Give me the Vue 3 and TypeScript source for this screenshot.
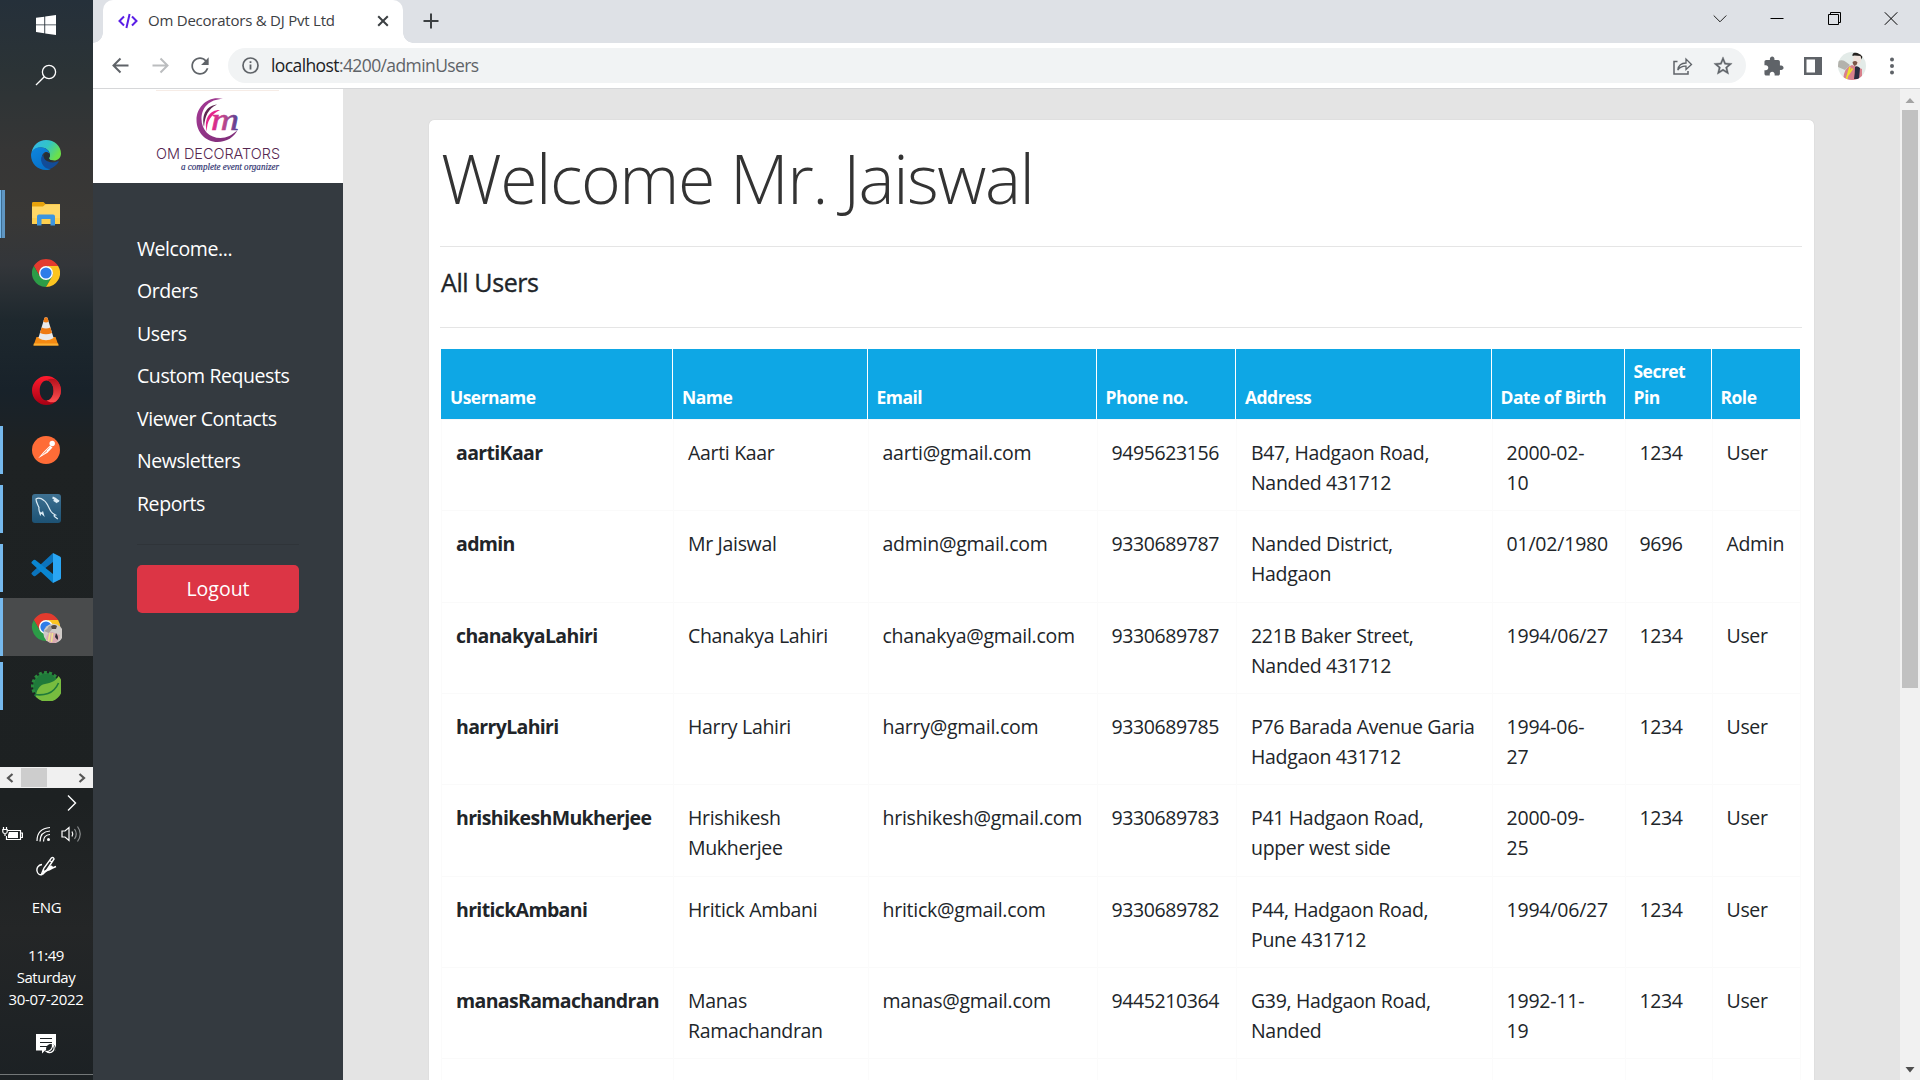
<script setup lang="ts">
interface User {
  username: string
  name: string
  email: string
  phone: string
  address: string[]
  dob: string[]
  pin: string
  role: string
}

const columns: string[][] = [
  ['Username'], ['Name'], ['Email'], ['Phone no.'], ['Address'], ['Date of Birth'], ['Secret', 'Pin'], ['Role'],
]

const navItems: string[] = ['Welcome...', 'Orders', 'Users', 'Custom Requests', 'Viewer Contacts', 'Newsletters', 'Reports']

const users: User[] = [
  { username: 'aartiKaar', name: 'Aarti Kaar', email: 'aarti@gmail.com', phone: '9495623156', address: ['B47, Hadgaon Road,', 'Nanded 431712'], dob: ['2000-02-', '10'], pin: '1234', role: 'User' },
  { username: 'admin', name: 'Mr Jaiswal', email: 'admin@gmail.com', phone: '9330689787', address: ['Nanded District,', 'Hadgaon'], dob: ['01/02/1980'], pin: '9696', role: 'Admin' },
  { username: 'chanakyaLahiri', name: 'Chanakya Lahiri', email: 'chanakya@gmail.com', phone: '9330689787', address: ['221B Baker Street,', 'Nanded 431712'], dob: ['1994/06/27'], pin: '1234', role: 'User' },
  { username: 'harryLahiri', name: 'Harry Lahiri', email: 'harry@gmail.com', phone: '9330689785', address: ['P76 Barada Avenue Garia', 'Hadgaon 431712'], dob: ['1994-06-', '27'], pin: '1234', role: 'User' },
  { username: 'hrishikeshMukherjee', name: 'Hrishikesh Mukherjee', email: 'hrishikesh@gmail.com', phone: '9330689783', address: ['P41 Hadgaon Road,', 'upper west side'], dob: ['2000-09-', '25'], pin: '1234', role: 'User' },
  { username: 'hritickAmbani', name: 'Hritick Ambani', email: 'hritick@gmail.com', phone: '9330689782', address: ['P44, Hadgaon Road,', 'Pune 431712'], dob: ['1994/06/27'], pin: '1234', role: 'User' },
  { username: 'manasRamachandran', name: 'Manas Ramachandran', email: 'manas@gmail.com', phone: '9445210364', address: ['G39, Hadgaon Road,', 'Nanded'], dob: ['1992-11-', '19'], pin: '1234', role: 'User' },
]
</script>

<template>
  <div class="screen">
    <aside class="taskbar">
      <div class="sys-btn">
        <svg width="20" height="20" viewBox="0 0 20 20" fill="#fff"><path d="M0 2.8 8.3 1.7V9.4H0zM9.2 1.5 20 0V9.4H9.2zM0 10.3H8.3V18.2L0 17.1zM9.2 10.3H20V20L9.2 18.4z" /></svg>
      </div>
      <div class="sys-btn">
        <svg width="22" height="22" viewBox="0 0 22 22" fill="none" stroke="#fff" stroke-width="1.3"><circle cx="14" cy="8" r="6.6" /><path d="M9.3 12.7 1 21" /></svg>
      </div>
      <div class="tasks">
        <div class="task">
          <svg width="30" height="30" viewBox="0 0 30 30">
            <defs>
              <linearGradient id="eTop" x1="0" y1="0" x2="1" y2=".5"><stop offset="0" stop-color="#35b4ee" /><stop offset=".55" stop-color="#32c5c5" /><stop offset="1" stop-color="#6be04a" /></linearGradient>
              <linearGradient id="eLeft" x1="0" y1="0" x2=".6" y2="1"><stop offset="0" stop-color="#0e86dd" /><stop offset="1" stop-color="#0671c9" /></linearGradient>
            </defs>
            <path d="M.6 12.5C1.8 5 7.800 0 15 0c8.500 0 15 6 15 13.500 0 4.500-3.500 7-7 7-3 0-5-1-5-2.300 0-.8 1-1.300 1-3.200 0-4-4-7.500-9-7.500C6 7.500 2.500 9 .6 12.500z" fill="url(#eTop)" />
            <path d="M0 15C0 10 4.500 7.200 9.500 7.200c5 0 8.500 3 9 6.500-1.500-1.700-3.500-2-5-1.200-2.500 1.500-3.500 5-2 8.500 1.500 3.600 4 6.500 8 8.200C17 30 16 30 15 30 6.500 30 0 23.500 0 15z" fill="url(#eLeft)" />
            <path d="M12.300 14.500c-2 2-3 5-1.500 8.500 1.200 3 4.500 6 8 6 3.700-1.200 7-4 9-7.200.3-.6-.2-.8-.8-.5-6 2.800-15 .2-14.700-6.800z" fill="#124c98" />
            <path d="M13 17c-.5-2.500 1.500-4.500 3.500-4.200 1.800.2 2.500 1.500 2.500 2.500 0 1.500-1 1.900-1 2.900 0 1.500 2.300 2.500 5 2.500-4 1.800-9.300.2-10-3.700z" fill="#263034" />
          </svg>
        </div>
        <div class="task">
          <i class="bar split"></i>
          <svg width="28" height="24" viewBox="0 0 28 24"><path d="M0 1.200Q0 0 1.200 0H11.500L13.500 2H28V22H0z" fill="#e8a30c" /><path d="M0 4.500H11L13.500 2.200H28V22H0z" fill="#ffd766" /><path d="M0 16H28V22H0z" fill="#fbc93c" opacity=".55" /><path d="M5 23.500V14.500Q5 12.500 7 12.500H21Q23 12.500 23 14.500V23.500H18.500V17H9.500V23.500z" fill="#3c95e0" /></svg>
        </div>
        <div class="task">
          <svg width="28" height="28" viewBox="0 0 48 48"><path d="M24 0C15 0 7.500 4.800 3.200 12L13.600 30 24 12H44.800C40.500 4.800 33 0 24 0z" fill="#e33b2e" /><path d="M3.200 12A24 24 0 0 0 24 48L34.400 30 24 36 13.600 30z" fill="#2c9c47" /><path d="M44.800 12A24 24 0 0 1 24 48L34.400 30C37 24 34 14 24 12z" fill="#fcc521" /><circle cx="24" cy="24" r="12" fill="#fff" /><circle cx="24" cy="24" r="9.600" fill="#2f7de9" /></svg>
        </div>
        <div class="task">
          <svg width="26" height="29" viewBox="0 0 26 29"><path d="M3.500 20H22.500L25.500 28.500H.5z" fill="#f58a12" /><path d="M.8 26.500H25.200L25.500 28.500H.5z" fill="#fbb034" /><path d="M11.500.8Q13-.4 14.500.8L20.600 21Q13 25.500 5.400 21z" fill="#e9e9ea" /><path d="M11.500.8Q13-.4 14.500.8L15.700 4.800Q13 6 10.300 4.800z" fill="#ef7a12" /><path d="M8.600 10.500Q13 12.300 17.400 10.500L19 16Q13 18.600 7 16z" fill="#ef7a12" /></svg>
        </div>
        <div class="task">
          <svg width="29" height="29" viewBox="0 0 29 29"><defs><linearGradient id="op" x1="0" y1="0" x2="0" y2="1"><stop offset="0" stop-color="#ff1b2d" /><stop offset="1" stop-color="#a70014" /></linearGradient><linearGradient id="op2" x1="0" y1="0" x2="0" y2="1"><stop offset="0" stop-color="#b4101c" /><stop offset="1" stop-color="#ff5050" /></linearGradient></defs><path d="M14.500 0a14.500 14.500 0 1 0 0 29 14.500 14.500 0 0 0 0-29zm0 4.500c4 0 7 4.500 7 10s-3 10-7 10-6.800-4.500-6.800-10 2.800-10 6.800-10z" fill="url(#op)" fill-rule="evenodd" /><path d="M14.500 4.500C17 2.500 20.500 2 24 3.600a14.500 14.500 0 0 1 0 21.800c-3.500 1.600-7 1-9.500-.9 4 0 7-4.500 7-10s-3-10-7-10z" fill="url(#op2)" /></svg>
        </div>
        <div class="task">
          <i class="bar"></i>
          <svg width="28" height="28" viewBox="0 0 28 28"><circle cx="14" cy="14" r="14" fill="#ff6c37" /><circle cx="20.200" cy="7.500" r="2.700" fill="#fff" /><path d="M18 9.500 20.500 11.500 15.500 16.800 6.200 22.200 11.500 16z" fill="#fff" /><path d="M12 17 17.500 11.500M10.500 18.500 15 15" stroke="#ff8e63" stroke-width=".7" /></svg>
        </div>
        <div class="task">
          <i class="bar"></i>
          <svg width="29" height="29" viewBox="0 0 29 29"><defs><linearGradient id="my" x1="0" y1="0" x2="0" y2="1"><stop offset="0" stop-color="#3e7192" /><stop offset="1" stop-color="#1d5274" /></linearGradient></defs><rect width="29" height="29" rx="3" fill="url(#my)" /><g fill="none" stroke="#dcecf5" stroke-width="1.200"><path d="M10.500 17.500 11.500 21 9 18.500 8.300 20.500Q6.500 16 7 13.500C5.500 10 3.800 7.500 4 5 6.500 3.500 9.500 4.500 12 6.500c3.500 2 4.500 7.500 7 11 1.200 1.700 2.800 2.500 4.500 3.500-1.500.3-1.800.8-1 1.500l3.300 2.500" /><path d="M20.500 3.500 23 4.500 22.500 6.500 25.500 8.500M23 4.500 25 6 27 7.500" stroke-width="2" /></g></svg>
        </div>
        <div class="task">
          <i class="bar"></i>
          <svg width="30" height="30" viewBox="0 0 30 30"><path d="M22 0 1.200 19.200Q-.2 20.400 1 21.600L2.600 23Q3.500 23.600 4.400 23L22 9z" fill="#0b74bd" /><path d="M22 30 1.200 10.800Q-.2 9.600 1 8.400L2.600 7Q3.500 6.400 4.400 7L22 21z" fill="#0a86d1" /><path d="M22 0 29 3.400Q30 4 30 5V25Q30 26 29 26.600L22 30z" fill="#2aa6f4" /></svg>
        </div>
        <div class="task active">
          <i class="bar"></i>
          <svg width="32" height="32" viewBox="0 0 32 32"><g transform="translate(2 2) scale(.583)"><path d="M24 0C15 0 7.500 4.800 3.200 12L13.600 30 24 12H44.800C40.500 4.800 33 0 24 0z" fill="#e33b2e" /><path d="M3.200 12A24 24 0 0 0 24 48L34.400 30 24 36 13.600 30z" fill="#2c9c47" /><path d="M44.800 12A24 24 0 0 1 24 48L34.400 30C37 24 34 14 24 12z" fill="#fcc521" /><circle cx="24" cy="24" r="12" fill="#fff" /><circle cx="24" cy="24" r="9.600" fill="#2f7de9" /></g><circle cx="23.200" cy="22.500" r="9.800" fill="#cfcbc8" /><path d="M14 20q4-2 5-5 4-1 5-1-2 5-5 8z" fill="#a7a29e" /><path d="M21 15.500q3-2.500 6-.5l-1 3h-4z" fill="#554b47" /><path d="M16 28q1-7 6-7l8 3q-1 8-7 8.300-4 0-7-4.300z" fill="#d9aab2" /><path d="M20 22 18.500 30M22.500 22l-1 9" stroke="#efe48c" stroke-width="1.500" /><path d="M26 22q3 4 1.500 7l-2.500-3z" fill="#2c2a35" /></svg>
        </div>
        <div class="task">
          <i class="bar"></i>
          <svg width="30" height="30" viewBox="0 0 30 30"><circle cx="15" cy="15" r="13" fill="#1f7a3a" /><circle cx="15" cy="15" r="13.500" fill="none" stroke="#2a8a3d" stroke-width="3" stroke-dasharray="2.900 2.200" /><path d="M27.500 5A15 15 0 1 1 5 26C5 20 8 14 14 13 20 12 25 10 27.500 5z" fill="#77bc3f" /><path d="M27.500 12Q24 20 17 22.500 11 24.500 4 23.500" fill="none" stroke="#1f7a3a" stroke-width="1.600" /></svg>
        </div>
      </div>
      <div class="tb-scroll">
        <svg width="8" height="10" viewBox="0 0 8 10"><path d="M6.500 1 2 5 6.500 9" fill="none" stroke="#555" stroke-width="2.200" /></svg>
        <i class="tb-thumb"></i>
        <svg width="8" height="10" viewBox="0 0 8 10"><path d="M1.500 1 6 5 1.500 9" fill="none" stroke="#555" stroke-width="2.200" /></svg>
      </div>
      <div class="tray-more"><svg width="10" height="18" viewBox="0 0 10 18"><path d="M1 1.500 8.500 9 1 16.500" fill="none" stroke="#fff" stroke-width="1.400" /></svg></div>
      <div class="tray">
        <svg width="21" height="16" viewBox="0 0 21 16"><path d="M5.500 4.500H18.500V13.500H4.500V10M19 7H20.400V11.500H19" fill="none" stroke="#fff" stroke-width="1.200" /><path d="M7 6H16V12H6V9z" fill="#fff" /><path d="M.8 3.500H5.200V6Q5 7.500 3 7.500T.8 6zM1.500 1V3.500M4.500 1V3.500M3 7.500V10" fill="none" stroke="#fff" stroke-width="1.200" /></svg>
        <svg width="16" height="16" viewBox="0 0 16 16" fill="none" stroke="#fff" stroke-width="1.200"><circle cx="13.500" cy="13.500" r="1.500" fill="#fff" stroke="none" /><path d="M8.500 15.500Q8.500 9 15 8.500M5 15.500Q5 5.500 15 5M2 15Q2 2.500 15 1.500" /></svg>
        <svg width="21" height="18" viewBox="0 0 21 18" fill="none" stroke-width="1.200"><path d="M1 6H4L8 2.500V15.500L4 12H1z" stroke="#fff" /><path d="M11 6.500Q12.500 9 11 11.500" stroke="#fff" /><path d="M13.500 4Q17 9 13.500 14M16.500 1.500Q22 9 16.500 16.500" stroke="#8b8e8f" /></svg>
      </div>
      <div class="pen"><svg width="21" height="21" viewBox="0 0 21 21" fill="none" stroke="#fff" stroke-width="1.400"><path d="M6 8.500C2 9 .5 12 1 15c.5 3 3 4.500 5 3.500 2-1.500 1.500-5 1.500-5" /><path d="M5.500 18 8 12 15.500 1.800Q17.500 1 18 3L10.500 14.500 6.500 18.500M13.500 4.500 16 6" /><path d="M11 14.500Q14.500 9 16 10.500C17 12-.5 19 14 13.500Q16 12 20 10.500" /></svg></div>
      <div class="lang">ENG</div>
      <div class="clock"><span class="time">11:49</span><span class="day">Saturday</span><span class="date">30-07-2022</span></div>
      <div class="notif"><svg width="20" height="20" viewBox="0 0 20 20"><path d="M0 0H20V16.500H9L6 19.500V16.500H0z" fill="#fff" /><path d="M4 4.500H16M4 8.500H16M4 12.500H11" stroke="#1d2224" stroke-width="1.200" /><circle cx="15" cy="15" r="5" fill="#1d2224" /><path d="M16.500 10.500A4.500 4.500 0 1 1 10.500 17.500 6 6 0 0 0 16.500 10.500z" fill="none" stroke="#fff" stroke-width="1.200" /></svg></div>
    </aside>

    <section class="browser">
      <header class="tabs">
        <div class="tab">
          <svg width="20" height="16" viewBox="0 0 20 16" fill="none" stroke="#5a1ee6" stroke-width="2"><path d="M6 3.500 1.500 8 6 12.500M14 3.500 18.500 8 14 12.500M11.600 1 8.400 15" /></svg>
          <span class="tab-title">Om Decorators &amp; DJ Pvt Ltd</span>
          <svg class="tab-x" width="12" height="12" viewBox="0 0 12 12"><path d="M1.200 1.200 10.800 10.800M10.800 1.200 1.200 10.800" stroke="#3c4043" stroke-width="2" /></svg>
        </div>
        <svg class="plus" width="16" height="16" viewBox="0 0 16 16"><path d="M8 .5V15.500M.5 8H15.500" stroke="#3c4043" stroke-width="2" /></svg>
        <div class="win">
          <svg width="14" height="14" viewBox="0 0 14 14" fill="none" stroke="#222"><path d="M.7 4.500 7 10.800 13.300 4.500" /></svg>
          <svg width="14" height="14" viewBox="0 0 14 14" fill="none" stroke="#000"><path d="M.5 7.500H13.500" /></svg>
          <svg width="14" height="14" viewBox="0 0 14 14" fill="none" stroke="#000"><path d="M1.500 3.500H11.500V13.500H1.500zM3.500 3.500V1.500H13.500V11.500H11.500" /></svg>
          <svg width="14" height="14" viewBox="0 0 14 14" fill="none" stroke="#000"><path d="M.8 1.300 13.300 13.800M13.300 1.300.8 13.800" /></svg>
        </div>
      </header>
      <div class="toolbar">
        <svg class="back" width="17" height="17" viewBox="0 0 17 17" fill="none" stroke="#5f6368" stroke-width="2"><path d="M16.500 8.500H2M8.500 1.500 1.500 8.500 8.500 15.500" /></svg>
        <svg class="fwd" width="17" height="17" viewBox="0 0 17 17" fill="none" stroke="#bbbdbf" stroke-width="2"><path d="M.5 8.500H15M8.500 1.500 15.500 8.500 8.500 15.500" /></svg>
        <svg class="reload" width="26" height="26" viewBox="0 0 24 24" fill="#5f6368"><path d="M17.650 6.350C16.200 4.900 14.210 4 12 4c-4.420 0-7.990 3.580-7.990 8s3.570 8 7.990 8c3.730 0 6.840-2.550 7.730-6h-1.700c-.9 2.600-3.200 4.400-6.030 4.400-3.530 0-6.400-2.870-6.400-6.400s2.870-6.400 6.400-6.400c1.770 0 3.350.75 4.500 1.910L13 11h7V4l-2.350 2.350z" /></svg>
        <div class="omnibox">
          <svg width="17" height="17" viewBox="0 0 17 17"><circle cx="8.500" cy="8.500" r="7.500" fill="none" stroke="#5f6368" stroke-width="1.700" /><path d="M8.500 7.500V12.500M8.500 4.300V6.100" stroke="#5f6368" stroke-width="1.800" /></svg>
          <span class="url"><b>localhost</b>:4200/adminUsers</span>
          <svg class="share" width="20" height="18" viewBox="0 0 20 18" fill="none" stroke="#5f6368" stroke-width="1.500"><path d="M4.500 4.500H1V17H15V14" /><path d="M4.800 13C5.500 8 9 6 13 6V2L18.500 7.500 13 12.500V9.200C10 9 7 10 4.800 13z" stroke-width="1.300" /></svg>
          <svg class="star" width="22" height="22" viewBox="0 0 24 24" fill="#5f6368" stroke="#5f6368" stroke-width=".4"><path d="M22 9.240l-7.190-.62L12 2 9.190 8.630 2 9.240l5.460 4.730L5.820 21 12 17.270 18.180 21l-1.630-7.030L22 9.240zM12 15.400l-3.760 2.270 1-4.280-3.320-2.880 4.380-.38L12 6.100l1.710 4.040 4.380.38-3.320 2.880 1 4.280L12 15.400z" /></svg>
        </div>
        <div class="actions">
          <svg width="20" height="20" viewBox="1.500 0.500 22 22" fill="#5f6368"><path d="M20.500 11H19V7c0-1.100-.9-2-2-2h-4V3.500C13 2.120 11.880 1 10.500 1S8 2.120 8 3.500V5H4c-1.100 0-1.990.9-1.990 2v3.800H3.500c1.490 0 2.700 1.210 2.700 2.700s-1.210 2.700-2.700 2.700H2V20c0 1.100.9 2 2 2h3.800v-1.500c0-1.490 1.210-2.700 2.700-2.700 1.490 0 2.700 1.210 2.700 2.700V22H17c1.100 0 2-.9 2-2v-4h1.500c1.380 0 2.500-1.120 2.500-2.500S21.880 11 20.500 11z" /></svg>
          <svg width="18" height="18" viewBox="0 0 18 18"><path d="M0 0H18V18H0zM2.500 2.500V15.500H11V2.500z" fill="#5f6368" fill-rule="evenodd" /></svg>
          <svg width="28" height="28" viewBox="0 0 28 28"><defs><clipPath id="av"><circle cx="14" cy="14" r="14" /></clipPath></defs><g clip-path="url(#av)"><path d="M0 0H28V28H0z" fill="#e3ebe8" /><path d="M0 9q5-2 8 1l4 3-5 5-7-3z" fill="#b3b2ac" /><path d="M5 28q1-13 9-15l10 4v11z" fill="#d9808c" /><path d="M15.500 3.500h7.500v5q-1 5-5 5-3-1-3-5z" fill="#efe3dc" /><path d="M14.500 4q-.5-4 4.500-3.500 5-1 5.500 4l-1 3-1-3.500-6-.5z" fill="#25221f" /><path d="M14.500 10q3-2 5 .5-.5 3-3 3.500-2-1.500-2-4z" fill="#7b5548" /><path d="M12 15 8.500 27M14.500 16.500 10 23" stroke="#eee12c" stroke-width="1.700" /><path d="M17 15q2-2 5 1l-1 11h-5q1-7 1-12z" fill="#2a2c40" /></g></svg>
          <svg width="4" height="18" viewBox="0 0 4 18" fill="#5f6368"><circle cx="2" cy="2.500" r="2" /><circle cx="2" cy="9" r="2" /><circle cx="2" cy="15.500" r="2" /></svg>
        </div>
      </div>

      <div class="page">
        <nav class="side">
          <div class="brand">
            <svg width="128" height="94" viewBox="0 0 128 94">
              <defs>
                <linearGradient id="mg" x1="0" y1="0" x2="1" y2="0"><stop offset="0" stop-color="#e5238c" /><stop offset=".5" stop-color="#b7468c" /><stop offset="1" stop-color="#4c4094" /></linearGradient>
                <linearGradient id="cg" x1="0" y1="0" x2="1" y2="1"><stop offset="0" stop-color="#a63a96" /><stop offset="1" stop-color="#7b2d77" /></linearGradient>
              </defs>
              <path d="M0 1.500H123" stroke="#f6ece6" />
              <path d="M67 10C53 6 40.500 17 40.500 31c0 12 9 22 21 22 9 0 17-5 20-12-5 5-11 8-17 8-11 0-19-8-19-19C45.500 19 53 10 67 10z" fill="url(#cg)" />
              <path d="M61 15.500C52 16.500 45 24 48 38c1-11 4-18 13-22.500z" fill="#5e2750" />
              <path d="M64 21C55 20.500 47 29 51 42.500 50.500 32.500 55 25.500 64 21z" fill="#e5238c" />
              <text x="55" y="41" font-family="Liberation Serif, serif" font-style="italic" font-size="31" textLength="28" lengthAdjust="spacingAndGlyphs" fill="url(#mg)" stroke="url(#mg)" stroke-width=".6">m</text>
              <text x="0" y="70" font-family="Inter, sans-serif" font-weight="300" font-size="15" textLength="124" lengthAdjust="spacingAndGlyphs" fill="#55264f">OM DECORATORS</text>
              <text x="25" y="81" font-family="Liberation Serif, serif" font-style="italic" font-size="10.500" textLength="98" lengthAdjust="spacingAndGlyphs" fill="#2f3270" stroke="#2f3270" stroke-width=".2">a complete event organizer</text>
            </svg>
          </div>
          <ul class="nav">
            <li v-for="item in navItems" :key="item">{{ item }}</li>
          </ul>
          <hr class="nav-rule" />
          <button class="logout">Logout</button>
        </nav>

        <main class="main">
          <div class="card">
            <h1>Welcome Mr. Jaiswal</h1>
            <hr />
            <h2>All Users</h2>
            <hr />
            <div class="table">
              <div class="row head">
                <div v-for="col in columns" :key="col[0]" class="th"><span v-for="line in col" :key="line">{{ line }}</span></div>
              </div>
              <div v-for="u in users" :key="u.username" class="row">
                <div class="td user">{{ u.username }}</div>
                <div class="td name">{{ u.name }}</div>
                <div class="td mail">{{ u.email }}</div>
                <div class="td num">{{ u.phone }}</div>
                <div class="td addr"><span v-for="line in u.address" :key="line">{{ line }}</span></div>
                <div class="td date"><span v-for="line in u.dob" :key="line">{{ line }}</span></div>
                <div class="td num">{{ u.pin }}</div>
                <div class="td">{{ u.role }}</div>
              </div>
              <div class="row"><div v-for="n in 8" :key="n" class="td"></div></div>
            </div>
          </div>
        </main>

        <div class="scroll">
          <svg width="10" height="20" viewBox="0 0 10 20"><path d="M.5 13 5 8 9.500 13z" fill="#a3a3a3" /></svg>
          <i class="thumb"></i>
          <svg class="down" width="10" height="20" viewBox="0 0 10 20"><path d="M.5 7 5 12.500 9.500 7z" fill="#505050" /></svg>
        </div>
      </div>
    </section>
  </div>
</template>

<style>
body { margin: 0; overflow: hidden; }
</style>

<style scoped>
* { box-sizing: border-box; }
svg { display: block; flex: none; }
.screen { display: flex; width: 1920px; height: 1080px; overflow: hidden; font-family: "Open Sans", "Noto Sans", sans-serif; }

.taskbar { width: 93px; height: 1080px; flex: none; display: flex; flex-direction: column; color: #fff; border-bottom: 1px solid #1d2224;
  background: linear-gradient(180deg, #25303a 0, #2b3336 70px, #363636 150px, #393836 215px, #33363a 265px, #1e282e 320px, #18222a 390px, #1e2223 450px, #1d2122 800px, #242627 930px, #1c2124 1080px); }
.sys-btn { height: 50px; display: flex; align-items: center; justify-content: center; flex: none; padding-right: 1px; }
.tasks { margin-top: 25px; flex: none; }
.task { position: relative; height: 59px; display: flex; align-items: center; justify-content: center; padding-right: 1px; }
.task.active { background: linear-gradient(#494b4c, #494b4c) 0 1px / 100% 58px no-repeat; padding-top: 1px; }
.bar { position: absolute; left: 0; top: 6px; width: 3px; height: 48px; background: #76b9ed; }
.bar.split { width: 5px; background: linear-gradient(90deg, #76b9ed 0 1px, #3e6d92 1px 2px, #5f96c2 2px); }
.active .bar { top: 1px; height: 58px; }
.tb-scroll { margin-top: 52px; height: 21px; background: #f0f0f0; display: flex; align-items: center; flex: none; padding: 0 6px; }
.tb-thumb { width: 26px; height: 19px; background: #cdcdcd; margin: 0 31px 0 7px; }
.tray-more { height: 30px; padding: 6px 0 0 67px; flex: none; }
.tray { height: 32px; display: flex; align-items: center; padding: 0 0 1px 2px; flex: none; }
.tray svg + svg { margin-left: 12px; }
.tray svg:last-child { margin-left: 10px; }
.pen { height: 40px; padding: 6px 0 0 36px; flex: none; }
.lang { text-align: center; font-size: 15px; line-height: 20px; margin-top: 7px; letter-spacing: -.3px; flex: none; }
.clock { display: flex; flex-direction: column; align-items: center; font-size: 15px; line-height: 22px; margin-top: 27px; flex: none; white-space: nowrap; letter-spacing: -.45px; padding-right: 1px; }
.date { letter-spacing: -.35px; }
.notif { margin: 24px 0 0 36px; height: 40px; flex: none; }
.taskbar::after { content: ""; height: 1px; background: #737778; flex: none; }

.browser { flex: 1; min-width: 0; display: flex; flex-direction: column; }
.tabs { height: 43px; background: #dee1e6; display: flex; align-items: flex-start; flex: none; padding-left: 10px; }
.tab { position: relative; width: 300px; height: 43px; background: #fff; border-radius: 10px 10px 0 0; display: flex; align-items: center; padding: 0 14px 2px 15px; color: #3c4043; }
.tab::before, .tab::after { content: ""; position: absolute; bottom: 0; width: 10px; height: 10px; }
.tab::before { left: -10px; background: radial-gradient(circle at 0 0, transparent 9.500px, #fff 10px); }
.tab::after { right: -10px; background: radial-gradient(circle at 100% 0, transparent 9.500px, #fff 10px); }
.tab-title { margin-left: 10px; font-size: 15px; letter-spacing: -.23px; white-space: nowrap; flex: 1; padding-bottom: 1px; }
.plus { margin: 13px 0 0 20px; }
.win { margin: 11px 22px 0 auto; display: flex; gap: 43px; }
.toolbar { height: 46px; background: #fff; border-bottom: 1px solid #d6d7d9; display: flex; align-items: center; flex: none; padding-left: 19px; }
.fwd { margin-left: 23px; }
.reload { margin-left: 18px; }
.omnibox { margin-left: 15px; width: 1518px; height: 35px; border-radius: 18px; background: #f1f3f4; display: flex; align-items: center; padding-left: 14px; }
.url { margin-left: 12px; font-size: 17.500px; line-height: 34px; letter-spacing: -.6px; color: #5f6368; white-space: nowrap; padding-bottom: 1px; }
.url b { font-weight: 400; color: #202124; }
.share { margin-left: auto; }
.star { margin: 0 12px 0 19px; }
.actions { display: flex; align-items: center; margin-left: 18px; }
.actions svg:nth-child(2) { margin-left: 20px; }
.actions svg:nth-child(3) { margin-left: 16px; }
.actions svg:nth-child(4) { margin-left: 24px; }

.page { flex: 1; min-height: 0; display: flex; background: #e4e4e4; }
.side { width: 250px; flex: none; background: #343a40; color: #fff; }
.brand { height: 94px; background: #fff; padding-left: 63px; }
.nav { list-style: none; margin: 44.500px 0 0; padding: 0 0 0 44px; }
.nav li { height: 42.500px; line-height: 42.500px; font-size: 19.500px; letter-spacing: -.42px; white-space: nowrap; }
.nav-rule { margin: 19px 44px 20px; border: 0; height: 1px; background: #2f3439; width: 162px; }
.logout { display: block; margin-left: 44px; width: 162px; height: 48px; border: 0; border-radius: 5px; background: #dc3545; color: #fff; font: 19.500px/48px "Open Sans", sans-serif; padding: 0; }

.main { flex: 1; min-width: 0; overflow: hidden; padding: 31px 0 0 86px; }
.card { width: 1385px; height: 1000px; background: #fff; border-radius: 5px; padding: 0 12px 0 11px; color: #212529; box-shadow: 0 0 1px rgba(0,0,0,.2); }
h1 { margin: 0; font-weight: 300; font-size: 68px; line-height: 84px; padding: 16px 0 0 1px; height: 126px; white-space: nowrap; letter-spacing: -1.450px; color: #333; }
hr { margin: 0; border: 0; height: 1px; background: #e5e5e5; }
h2 { margin: 0; font-size: 25px; line-height: 30px; height: 80px; padding: 20px 0 0 1px; font-weight: 500; letter-spacing: -.4px; -webkit-text-stroke: .35px #212529; }
.table { margin: 21px 0 0 1px; }
.row { display: grid; grid-template-columns: 232px 194.500px 229px 139.500px 255.500px 133px 87px 89.500px; height: 91.330px; }
.row.head { height: 71px; }
.th { background: #0ea7e5; color: #fff; border-right: 1px solid #fff; display: flex; flex-direction: column; justify-content: flex-end; font-weight: 700; font-size: 17.500px; line-height: 26px; padding: 0 0 9px 9px; letter-spacing: -.53px; white-space: nowrap; border-bottom: 1px solid #f6f8f9; }
.td { border-left: 1px solid #fbfbfb; border-bottom: 1px solid #fafafa; padding: 18px 10px 0 14px; font-size: 19.500px; line-height: 30px; letter-spacing: -.32px; }
.td:last-child { border-right: 1px solid #fbfbfb; }
.td span { display: block; white-space: nowrap; }
.td.user { font-weight: 700; letter-spacing: -.65px; white-space: nowrap; }
.td.num { letter-spacing: -.4px; }
.td.mail { white-space: nowrap; letter-spacing: -.25px; }
.td.date { letter-spacing: -.2px; }

.scroll { width: 20px; flex: none; background: #f1f1f1; display: flex; flex-direction: column; align-items: center; }
.scroll svg { margin-top: 1px; }
.thumb { width: 16px; height: 578px; background: #c1c1c1; }
.scroll .down { margin-top: auto; }
</style>
